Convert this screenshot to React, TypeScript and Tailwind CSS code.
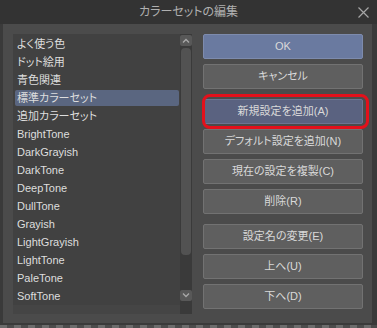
import React from 'react';

const items = [
  'よく使う色',
  'ドット絵用',
  '青色関連',
  '標準カラーセット',
  '追加カラーセット',
  'BrightTone',
  'DarkGrayish',
  'DarkTone',
  'DeepTone',
  'DullTone',
  'Grayish',
  'LightGrayish',
  'LightTone',
  'PaleTone',
  'SoftTone',
];

const buttons = [
  { label: '新規設定を追加(A)', gap: 'mt-[10px]', tone: 'focus' },
  { label: 'デフォルト設定を追加(N)', gap: 'mt-[5px]', tone: 'plain' },
  { label: '現在の設定を複製(C)', gap: 'mt-[5px]', tone: 'plain' },
  { label: '削除(R)', gap: 'mt-[5px]', tone: 'plain' },
  { label: '設定名の変更(E)', gap: 'mt-[10px]', tone: 'plain' },
  { label: '上へ(U)', gap: 'mt-[5px]', tone: 'plain' },
  { label: '下へ(D)', gap: 'mt-[5px]', tone: 'plain' },
];

function Chevron({ up }: { up?: boolean }) {
  return (
    <svg width="8" height="5" viewBox="0 0 8 5" fill="none" stroke="#a8a8a8" strokeWidth="1.3">
      {up ? <path d="M1 4.5 L4 1.5 L7 4.5" /> : <path d="M1 0.5 L4 3.5 L7 0.5" />}
    </svg>
  );
}

function DlgButton({ label, tone, className = '' }: { label: string; tone: string; className?: string }) {
  const look =
    tone === 'ok'
      ? 'bg-[#6a7aa0] border-[#7d8bad]'
      : tone === 'focus'
        ? 'bg-[#5a6280] border-[#6c7492]'
        : 'bg-[#5f5f5f] border-[#727272]';
  return (
    <div className={`flex h-[25px] items-center justify-center rounded-[2px] border text-[11px] text-[#d9d9d9] ${look} ${className}`}>
      {label}
    </div>
  );
}

export default function App() {
  return (
    <div
      className="flex h-[328px] w-[377px] flex-col overflow-hidden bg-[#3a3a3a] [font-feature-settings:'palt']"
      style={{ fontFamily: '"Liberation Sans", "Noto Sans CJK JP", sans-serif' }}
    >
      {/* title bar */}
      <div className="relative flex h-[24px] shrink-0 items-center justify-center bg-[#333333] text-[12px] text-[#b0b0b0]">
        カラーセットの編集
        <svg className="absolute right-[8px] top-[7px]" width="11" height="11" viewBox="0 0 11 11" stroke="#a6a6a6" strokeWidth="1.2">
          <path d="M0.5 0.5 L10.5 10.5 M10.5 0.5 L0.5 10.5" />
        </svg>
      </div>

      {/* panel */}
      <div className="ml-[3px] mr-[5px] flex h-[299px] shrink-0 bg-[#4b4b4b] pl-[10px] pr-[9px] pt-[10px] pb-[9px]">
        {/* list */}
        <div className="flex h-[280px] w-[179px] bg-[#414141]">
          <div className="flex flex-1 flex-col">
            <div className="flex-1 pt-[1px]">
              {items.map((it, i) => (
                <div key={it} className="flex h-[18px] items-center">
                  <div
                    className={`ml-[2px] mr-[1px] flex h-[16px] flex-1 items-center rounded-[2px] pl-[2px] text-[11px] text-[#dedede] ${
                      i === 3 ? 'bg-[#5a6680]' : ''
                    }`}
                  >
                    {it}
                  </div>
                </div>
              ))}
            </div>
            <div className="h-[9px] bg-[#454545]" />
          </div>
          {/* scrollbar */}
          <div className="flex w-[12px] flex-col bg-[#3a3a3a] pt-[1px]">
            <div className="flex h-[11px] items-center justify-center rounded-[2px] bg-[#585858]">
              <Chevron up />
            </div>
            <div className="mx-[1px] mt-[2px] h-[207px] rounded-[4px] bg-[#525252]" />
            <div className="flex-1" />
            <div className="mb-[13px] flex h-[11px] items-center justify-center rounded-[2px] bg-[#585858]">
              <Chevron />
            </div>
          </div>
        </div>

        {/* buttons */}
        <div className="ml-[11px] flex w-[160px] flex-col">
          <DlgButton label="OK" tone="ok" />
          <DlgButton label="キャンセル" tone="plain" className="mt-[5px]" />
          {buttons.map((b) => (
            <div key={b.label} className={`relative ${b.gap}`}>
              <DlgButton label={b.label} tone={b.tone} />
              {b.tone === 'focus' && (
                <div className="absolute -bottom-[5px] -left-[1px] -right-[6px] -top-[5px] rounded-[8px] border-[3px] border-[#e3101b]" />
              )}
            </div>
          ))}
        </div>
      </div>

      {/* bottom edge */}
      <div className="mt-[2px] h-[3px] bg-[repeating-linear-gradient(90deg,#6c6c6c_0_7px,#4c4c4c_7px_14px)]" />
    </div>
  );
}
